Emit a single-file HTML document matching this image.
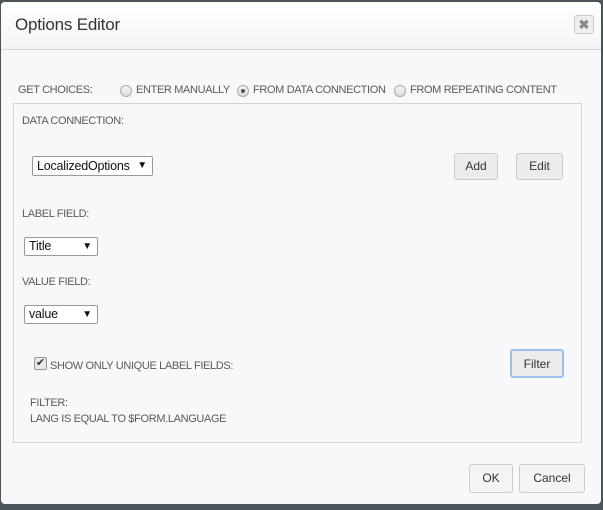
<!DOCTYPE html>
<html><head><meta charset="utf-8"><style>
body{margin:0;width:603px;height:510px;background:#4b5459;position:relative;overflow:hidden;font-family:"Liberation Sans",Arial,sans-serif}
.dlg{position:absolute;left:1px;top:2px;width:600px;height:502px;background:#f8f8fa;border-radius:4px;overflow:hidden}
.hdr{position:absolute;left:0;top:0;width:600px;height:47px;background:linear-gradient(#fff,#f4f4f6);border-bottom:1px solid #d6d6da}
.t{position:absolute;font-size:11px;color:#5a5a5a;white-space:nowrap;letter-spacing:-0.35px}
.btn{position:absolute;box-sizing:border-box;border:1px solid #ccc;border-radius:3px;background:#ececec;font-size:12px;color:#333;text-align:center}
.sel{position:absolute;box-sizing:border-box;border:1px solid #999;background:#fff;font-size:12.5px;color:#111;padding-left:4px;border-radius:2px;letter-spacing:-0.2px}
.sel span{position:absolute;right:5px;top:0;font-size:10px}
.rad{position:absolute;width:10px;height:10px;border:1px solid #aaa;border-radius:50%;background:linear-gradient(#f4f4f4,#ddd)}
</style></head><body>
<div class="dlg">
<div class="hdr">
<div style="position:absolute;left:14px;top:13px;font-size:17px;color:#333;letter-spacing:-0.2px">Options Editor</div>
<div style="position:absolute;left:573px;top:13px;width:20px;height:19px;box-sizing:border-box;border:1px solid #ccc;border-radius:3px;background:#eee;color:#888;font-size:13px;font-weight:bold;text-align:center;line-height:17px">✖</div>
</div>
<div class="t" style="left:17px;top:82px">GET CHOICES:</div>
<div class="rad" style="left:119px;top:83px"></div>
<div class="t" style="left:135px;top:82px">ENTER MANUALLY</div>
<div class="rad" style="left:236px;top:83px"><div style="position:absolute;left:3px;top:3px;width:4px;height:4px;border-radius:50%;background:#555"></div></div>
<div class="t" style="left:252px;top:82px">FROM DATA CONNECTION</div>
<div class="rad" style="left:393px;top:83px"></div>
<div class="t" style="left:409px;top:82px">FROM REPEATING CONTENT</div>
<div style="position:absolute;left:12px;top:101px;width:567px;height:338px;border:1px solid #d4d4d8;background:#f8f8fa"></div>
<div class="t" style="left:21px;top:113px">DATA CONNECTION:</div>
<div class="sel" style="left:31px;top:154px;width:121px;height:20px;line-height:18px">LocalizedOptions<span>▼</span></div>
<div class="btn" style="left:453px;top:151px;width:44px;height:27px;line-height:25px">Add</div>
<div class="btn" style="left:515px;top:151px;width:47px;height:27px;line-height:25px">Edit</div>
<div class="t" style="left:21px;top:206px">LABEL FIELD:</div>
<div class="sel" style="left:23px;top:235px;width:74px;height:19px;line-height:17px">Title<span>▼</span></div>
<div class="t" style="left:21px;top:274px">VALUE FIELD:</div>
<div class="sel" style="left:23px;top:303px;width:74px;height:19px;line-height:17px">value<span>▼</span></div>
<div style="position:absolute;left:33px;top:355px;width:11px;height:11px;border:1px solid #999;border-radius:2px;background:#e8e8e8;font-size:11px;line-height:11px;text-align:center;color:#333">✔</div>
<div class="t" style="left:49px;top:358px">SHOW ONLY UNIQUE LABEL FIELDS:</div>
<div class="btn" style="left:509px;top:347px;width:54px;height:29px;line-height:27px;border:2px solid #9cc0ee">Filter</div>
<div class="t" style="left:29px;top:395px">FILTER:</div>
<div class="t" style="left:29px;top:411px">LANG IS EQUAL TO $FORM.LANGUAGE</div>
<div class="btn" style="left:468px;top:462px;width:44px;height:29px;line-height:27px;background:#f4f4f6">OK</div>
<div class="btn" style="left:518px;top:462px;width:66px;height:29px;line-height:27px;background:#f4f4f6">Cancel</div>
</div>
</body></html>
